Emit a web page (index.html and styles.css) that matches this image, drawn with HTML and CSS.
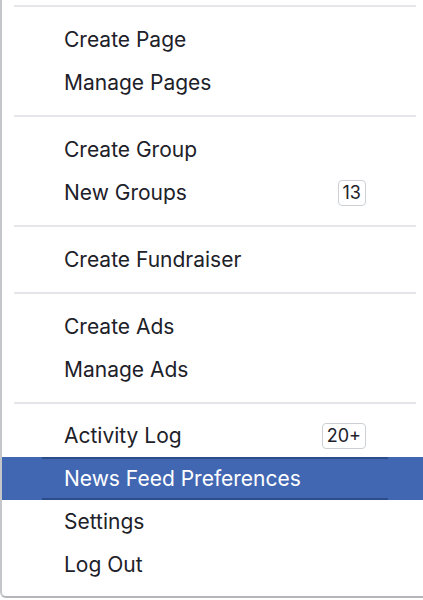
FILE: index.html
```html
<!DOCTYPE html>
<html lang="en">
<head>
    <meta charset="UTF-8">
    <meta name="viewport" content="width=device-width, initial-scale=1.0">
    <title>Account Menu</title>
    <link rel="stylesheet" href="styles.css">
</head>
<body>
    <div class="menu">
        <div class="divider"></div>
        <ul class="section">
            <li class="item">Create Page</li>
            <li class="item">Manage Pages</li>
        </ul>
        <div class="divider"></div>
        <ul class="section">
            <li class="item">Create Group</li>
            <li class="item">New Groups <span class="badge">13</span></li>
        </ul>
        <div class="divider"></div>
        <ul class="section">
            <li class="item">Create Fundraiser</li>
        </ul>
        <div class="divider"></div>
        <ul class="section">
            <li class="item">Create Ads</li>
            <li class="item">Manage Ads</li>
        </ul>
        <div class="divider"></div>
        <ul class="section last">
            <li class="item">Activity Log <span class="badge">20+</span></li>
            <li class="item active">News Feed Preferences</li>
            <li class="item">Settings</li>
            <li class="item">Log Out</li>
        </ul>
    </div>
</body>
</html>
```

FILE: styles.css
```css
body {
    margin: 0;
    background-color: #fff;
    font-family: Inter, "Liberation Sans", Arial, sans-serif;
    color: #1d2129;
}
.menu {
    height: 598px;
    box-sizing: border-box;
    padding-top: 5px;
    background-color: #fff;
    border-left: 2px solid #c4c6ca;
    border-bottom: 2px solid #b4b6ba;
    border-bottom-left-radius: 6px;
    overflow: hidden;
}
.divider {
    height: 2px;
    margin: 0 7px 0 12px;
    background-color: #e5e6e9;
}
.section {
    list-style: none;
    margin: 0;
    padding: 11px 0;
}
.section.last {
    padding-top: 10px;
}
.item {
    display: flex;
    align-items: center;
    justify-content: space-between;
    height: 43px;
    padding: 0 57px 0 62px;
    font-size: 21px;
    position: relative;
}
.item.active {
    background-color: #4267b2;
    color: #fff;
}
.item.active::before,
.item.active::after {
    content: "";
    position: absolute;
    left: 40px;
    width: 346px;
    height: 2px;
    background-color: #2d4d8a;
}
.item.active::before {
    top: 0;
}
.item.active::after {
    bottom: 0;
}
.badge {
    border: 1px solid #ccd0d5;
    border-radius: 4px;
    padding: 1px 4px;
    font-size: 18px;
    line-height: 22px;
}
```
